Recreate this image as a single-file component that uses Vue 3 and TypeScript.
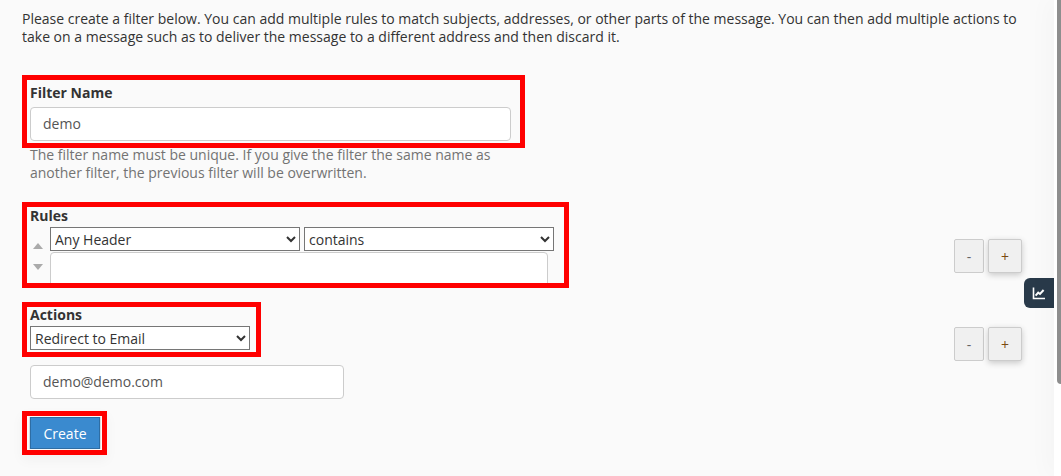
<script setup lang="ts">
import { ref } from 'vue'

const filterName = ref('demo')
const ruleValue = ref('')
const email = ref('demo@demo.com')
</script>

<template>
  <div class="page">
    <p class="intro">
      Please create a filter below. You can add multiple rules to match subjects, addresses, or other parts of the message. You can then add multiple actions to take on a message such as to deliver the message to a different address and then discard it.
    </p>

    <div class="mark mark-name">
      <label class="label">Filter Name</label>
      <input v-model="filterName" class="text-input" type="text" />
    </div>
    <p class="help">
      The filter name must be unique. If you give the filter the same name as another filter, the previous filter will be overwritten.
    </p>

    <div class="row row-rules">
      <div class="mark mark-rules">
        <label class="label">Rules</label>
        <div class="rule-body">
          <div class="arrows">
            <span class="arrow up"></span>
            <span class="arrow down"></span>
          </div>
          <div class="rule-fields">
            <div class="selects">
              <select class="sel sel-header"><option>Any Header</option></select>
              <select class="sel sel-op"><option>contains</option></select>
            </div>
            <textarea v-model="ruleValue" class="rule-text"></textarea>
          </div>
        </div>
      </div>
      <div class="steppers">
        <button class="step minus">-</button>
        <button class="step plus">+</button>
      </div>
    </div>

    <div class="row row-actions">
      <div class="mark mark-actions">
        <label class="label">Actions</label>
        <select class="sel sel-action"><option>Redirect to Email</option></select>
      </div>
      <div class="steppers">
        <button class="step minus">-</button>
        <button class="step plus">+</button>
      </div>
    </div>

    <input v-model="email" class="text-input email" type="text" />

    <div class="mark mark-create">
      <button class="create">Create</button>
    </div>

    <button class="stats-tab" aria-label="Statistics">
      <svg width="14" height="14" viewBox="0 0 14 14">
        <path d="M1.5 1.5V12.5H13" fill="none" stroke="#fff" stroke-width="1.6" />
        <path d="M3.6 9.6 6.2 6.6 8 8 11.6 4" fill="none" stroke="#fff" stroke-width="2" />
      </svg>
    </button>
    <div class="scrollbar"><div class="thumb"></div></div>
  </div>
</template>

<style scoped>
.page {
  position: relative;
  box-sizing: border-box;
  height: 476px;
  padding: 10px 0 0 22px;
  overflow: hidden;
  background: #fafafa;
  color: #333;
  font-family: "Open Sans", sans-serif;
  font-size: 14px;
  line-height: 18px;
}

.intro {
  width: 1010px;
  margin: 0 0 29px;
}

.mark {
  box-sizing: border-box;
  border: 5px solid #f00;
}

.mark-name {
  width: 503px;
  height: 73px;
  padding: 4px 9px 0 3px;
}

.label {
  display: block;
  font-weight: 700;
}

.text-input {
  box-sizing: border-box;
  display: block;
  width: 100%;
  height: 34px;
  padding: 5px 12px 7px;
  border: 1px solid #ccc;
  border-radius: 4px;
  background: #fff;
  color: #555;
  font: inherit;
  outline: none;
}

.mark-name .text-input {
  margin-top: 5px;
}

.help {
  width: 490px;
  margin: -2px 0 20px 8px;
  color: #737373;
}

.row {
  display: flex;
  justify-content: space-between;
  align-items: flex-start;
}

.row-rules {
  height: 86px;
}

.mark-rules {
  width: 547px;
  height: 86px;
  padding: 0 9px 0 3px;
  overflow: hidden;
}

.rule-body {
  display: flex;
  gap: 7px;
  margin-top: 2px;
  padding-left: 3px;
}

.arrows {
  display: flex;
  flex-direction: column;
  gap: 15px;
  padding-top: 16px;
}

.arrow {
  width: 0;
  height: 0;
  border-left: 5px solid transparent;
  border-right: 5px solid transparent;
}

.arrow.up {
  border-bottom: 6px solid #aaa;
}

.arrow.down {
  border-top: 6px solid #aaa;
}

.rule-fields {
  width: 504px;
}

.selects {
  display: flex;
  gap: 4px;
}

.sel {
  box-sizing: border-box;
  height: 24px;
  padding: 0;
  border: 1px solid #767676;
  border-radius: 0;
  background: #fff;
  color: #333;
  font-family: inherit;
  font-size: 14px;
}

.sel-header,
.sel-op {
  width: 250px;
}

.rule-text {
  box-sizing: border-box;
  display: block;
  width: 498px;
  height: 40px;
  margin-top: 1px;
  border: 1px solid #ccc;
  border-radius: 4px;
  background: #fff;
  resize: none;
  outline: none;
}

.steppers {
  display: flex;
  gap: 4px;
  margin: 37px 39px 0 0;
}

.step {
  box-sizing: border-box;
  height: 34px;
  padding: 0;
  border: 1px solid #ccc;
  border-radius: 2px;
  background: #f0f0f0;
  color: #666;
  font-family: inherit;
  font-size: 14px;
}

.step.minus {
  width: 30px;
}

.step.plus {
  width: 34px;
  color: #7a4a10;
  box-shadow: 0 2px 6px rgba(0, 0, 0, 0.2);
}

.row-actions {
  height: 55px;
  margin-top: 14px;
}

.mark-actions {
  width: 239px;
  height: 55px;
  padding: 0 5px 0 3px;
}

.mark-actions .label {
  margin-top: -1px;
}

.sel-action {
  display: block;
  width: 220px;
  margin-top: 2px;
}

.row-actions .steppers {
  margin-top: 25px;
}

.email {
  width: 314px;
  margin: 8px 0 0 8px;
}

.mark-create {
  display: inline-block;
  width: 85px;
  height: 44px;
  margin-top: 12px;
  padding: 1px 2px 1px 3px;
  box-shadow: 0 5px 12px rgba(0, 0, 0, 0.04);
}

.create {
  display: block;
  width: 70px;
  height: 32px;
  padding: 0;
  border: 1px solid #2e6da4;
  background: #3a8acf;
  box-shadow: -1px 0 #ddd, 1px 0 #ddd;
  color: #fff;
  font-family: inherit;
  font-size: 14px;
}

.stats-tab {
  position: absolute;
  top: 278px;
  left: 1024px;
  display: flex;
  align-items: center;
  justify-content: center;
  width: 30px;
  height: 30px;
  padding: 0;
  border: 0;
  border-radius: 6px 0 0 6px;
  background: #293a4a;
}

.scrollbar {
  position: absolute;
  top: 0;
  right: 0;
  bottom: 0;
  width: 7px;
  background: #fff;
  box-shadow: 0 0 24px rgba(0, 0, 0, 0.08);
}

.thumb {
  width: 4px;
  height: 384px;
  margin-left: 3px;
  border-radius: 0 0 0 4px;
  background: #8e8e8e;
}
</style>

<style>
html,
body {
  margin: 0;
  background: #fafafa;
}
</style>
